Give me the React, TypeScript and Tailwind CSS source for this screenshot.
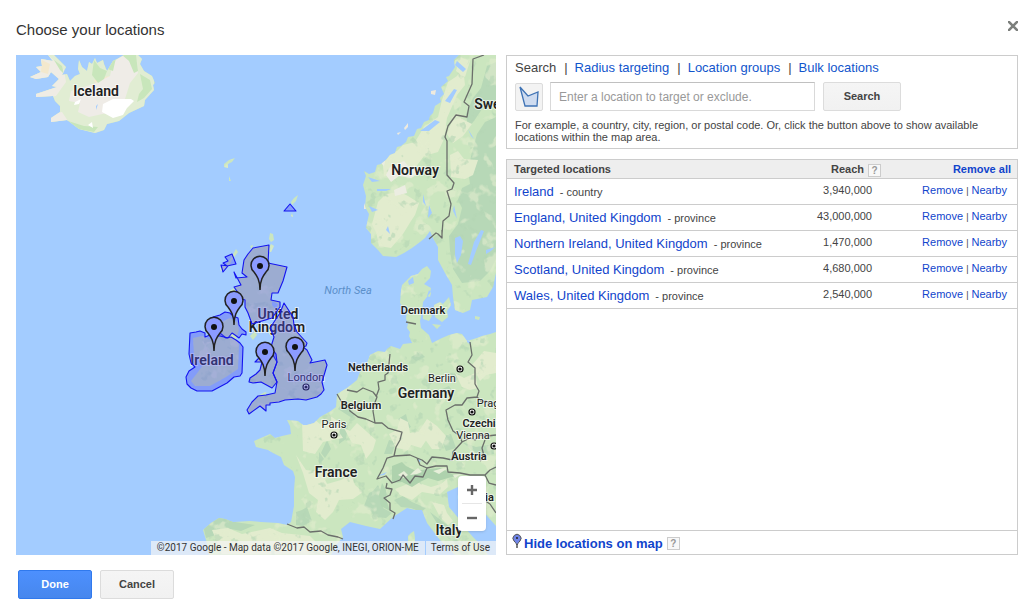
import { useState } from "react";

type Location = { name: string; kind: string; reach: string };

const initialLocations: Location[] = [
  { name: "Ireland", kind: "country", reach: "3,940,000" },
  { name: "England, United Kingdom", kind: "province", reach: "43,000,000" },
  { name: "Northern Ireland, United Kingdom", kind: "province", reach: "1,470,000" },
  { name: "Scotland, United Kingdom", kind: "province", reach: "4,680,000" },
  { name: "Wales, United Kingdom", kind: "province", reach: "2,540,000" },
];

const tabs = ["Search", "Radius targeting", "Location groups", "Bulk locations"];

const land = [
  // Iceland
  "M48 55l5 6-12-2 1 7-6 1 5 5-11 5 6 2 12-2 3-5 8 7-7 7 5 1-21 7v3l17-1 2 5 5 5v6l-9 6v4l16-2 12 9 16 4 9-3 3-6 12-3 10-8 15-7 1-6 9-10-1-5 2-2-3-7-8-5-4-7 2-5-4-4h-14l-7 4-4 2-6 10-3-7-1-4-6 3-2-5-3 6-3-2-2 9-5-4-3-7-1 9 2 5-5 2-5 5-3-7-5 1 4-8-6-6-6-6z",
  // Faroe, Shetland, Orkney, Hebrides
  "M224 164l5-4 6-2-3 4-4 2v4l-4-1zM229 176l2 5h-2zM291 202l3-4 4-3-2 6-4 4zM292 213l1 4-2-1zM269 239l1-6 3 1 1 6-3 2zM267 252l4-8 3 2-3 6zM231 258l5-9 2 3-6 8-3 6-8 5-1-3 6-3zM229 291l5-3 1 3zM250 246l3-1-1 4zM250 336l5-5 2 4-4 5zM266 328l5-3 2 7-2 4zM272 301l6 3-2 6-4-5zM258 396l7-4 2 1-5 3z",
  // Norway and Sweden
  "M459 55l-5 5 1 7-6 9-3 1 2 4-7 6 3 7-4 4 1 4-6 4-2 7-3 3-1 4-5 2-3 6-4 1-3 7-6 1-2 5-5 4-4 1-2 6-5 2-4 5-5 4-4 1-2 7-6 2L364 171L366 176L363 185L366 196L365 207L369 214L366 228L371 234L371 243L378 250L383 256L396 257L404 253L412 248L420 242L425 238L430 231L433 238L438 247L438 260L445 273L452 285L453 297L455 310L463 313L470 310L472 300L487 297L493 287L496 273V55z",
  // Mainland Europe
  "M427 266L422 269L418 274L411 276L407 280L402 285L401 291L400 303L403 307L407 310L406 319L408 323L407 328L410 332L409 336L412 343L403 344L400 349L391 346L387 349L385 352L378 351L370 355L367 363L360 372L357 380L347 388L337 394L336 407L331 411L320 417L314 423L307 425L303 425L298 421L287 420L290 426L291 434L282 436L275 438L270 434L254 441L256 447L268 450L273 453L281 457L284 465L293 471L295 477L294 490L294 506L291 522L287 525L278 523L261 522L250 521L233 522L225 519L219 518L211 523L203 530L206 540L209 555H331L336 545L343 537L341 529L350 522L366 526L380 529L393 517L407 508L415 510L422 510L427 523L440 540L455 555H488L483 547L473 537L465 528L460 520L449 507L447 492L458 487L468 495L480 508L496 526V332L490 334L482 336L477 338L467 341L462 334L457 333L449 335L442 338L432 343L429 335L421 328L420 321L422 312L423 302L430 293L431 288L424 284L430 278L431 271z",
  "M423 313l6-2 3 5-3 5-6-2zM434 305l6-3 3 2 6-7 2 8-4 6 1 6-6 5-7-5zM432 324l9 1-4 4zM475 316l5 1-1 3-4-1zM429 290l2 3-1 4-3-1zM408 536l3-3 3-2 1 7-1 12-4 5h-3l1-10z",
];

const targets = [
  "M269 245L253 248L248 254L244 260L242 273L247 277L236 278L234 272L241 285L234 287L239 294L237 297L245 300L245 307L248 313L252 324L272 318L280 307L280 302L271 300L272 293L278 293L283 281L287 267L268 263z",
  "M284 303L293 317L294 325L297 332L307 343L306 346L303 347L307 350L312 360L310 363L325 360L327 365L325 372L322 382L324 390L321 394L317 397L306 400L298 399L285 400L279 402L270 403L270 405L266 405L266 411L260 406L249 414L247 410L252 402L258 396L266 395L275 393L277 382L273 373L277 362L270 350L274 337L270 328L280 313z",
  "M258 350L259 358L255 362L262 362L260 370L256 374L250 378L249 382L253 383L261 382L272 388L277 382L273 373L277 362L276 354L273 350z",
  "M190 333L196 332L200 331L205 333L205 337L210 335L216 336L220 333L226 338L231 337L236 340L240 343L243 347L242 373L240 376L234 377L227 383L212 391H197L191 388L187 384L186 377L189 371L195 367L191 363L189 354z",
  "M213 317L220 315L225 312L230 313L233 316L238 318L239 325L242 329L246 332V335L242 334L239 338L235 335L232 333L228 338L220 336L216 336L213 330z",
  "M225 257l7-3 4 10-9 2-4-3 5-2zM221 265l7 1-5 6zM284 211l6-7 6 7z",
];

// the Irish coast lies a little inside its target outline
const irishCoast = "M193 338l9-2 8 4 11-6 1-12 8-4 7 4 2 8-3 9 3 6-1 24-12 8-16 9h-15l-4-5 7-9 5-7-9-10z";

const coastline = [...land, targets[0], targets[1], targets[2], irishCoast].join(" ");

const borders = [
  "M484 55l-11 4-1 25-8 18 5 4-2 11-11-2-8 11-3 11 2 4v34l7 8-2 6-5 2 4 13-2 12-6 5-1 13M442 230v8l-4-4-2-1-7 6",
  "M406 322l10 2M390 354L388 373L385 375L385 380L378 382L379 389L376 397M337 394L341 401L348 405L350 411L358 417L366 419L375 423M347 390L357 392L363 388L373 392L377 397L374 405L373 411L375 423L382 423L388 428L402 432L400 440L396 447L394 456L387 458L383 468L377 479L386 476L392 483L400 480L403 475L410 483L415 476L423 477L427 468L420 465L417 458L410 455L394 456",
  "M387 483L386 488L392 489L390 495L384 498L390 503L390 510L395 513L393 519M417 458L422 460L427 464L432 457L443 458L452 460L453 452L462 442L460 436L453 431L448 420L446 410L455 405L462 405L467 398L477 397L479 391L475 384L475 368L468 362L472 355L470 342",
  "M427 468L436 466L447 466L448 472L460 473L470 475H478L485 475L490 470L496 467M462 442L470 438L475 440L480 435L487 436L496 435M477 397l4 4 5 0 3 3 7-2M485 475l4 8 7 2M287 524l10 4 7-1 6 5 11-1 7 4 10 2 5 2M484 500l6 4 6 9M485 440l-3 8 2 8-4 5",
];

const yellowPatches =
  "M302 422l12-3 6 5 9-9 13 9-3 8 4 6-20 4-8 12-12-3zM296 455l10 15 15 2 6 12 14-4 10-6 4 11 8 7-10 7-14 1-6 12-8 8-9-8 2-12-9-7-6-20zM344 428l6 3 7-8 19 17-3 10-7 9-5-14-9-2zM389 434l8-4 3-12 8 4 2 11 13-3 6 6-8 12-10-3-3 5-12-2zM419 431l8-12 10 7 9 10-5 13-9 0zM395 489l10-4 8-4 18 6 10-3 6-5 1 8-9 8-17-3-10 8-12-5zM432 502l12 3 3 8 6 8-5 4-8-8zM455 373l9 5 11-5 3 15-8 2-8-3zM472 365l12-14 12 2v20l-10 2-6 6zM212 530l16-2 14 6 28-6 12 5 28 3 10 10 8 8H222zM378 202l8-8 14-2 8 4 11 7-4 12-4 6-8 13-12 14-12-2-3-14-4-8zM382 157l15-6 6-6 12-3 9-15 14-10 4-17 6-18 9-6 6-9 2 18-8 10-10 23-3 21-6 13-14 4-9 12-17 6-14 2zM450 155l8-4 6 8 14 1-5 15-8 4-14-2zM460 57l10 4-5 16-9-6zM452 121l8-3 12 6-9 12-10 7-6-9z";
const greenPatches =
  "M462 188l8-4-2-14 4-18 5-18 8-12 11-5v142l-6 12-10 10-18 2-9-14-3-18-1-15 9-12 4-16-4-8zM473 98l8-10 6-22 9-4v42l-14 5-8 12-6 7-2-14zM296 512l6-2 5-3 5 14-9 5-7-1zM340 427l8-2-2 14-7 5zM338 409l4-6 6 2 9 7-5 6zM369 493l4-2 5-6 7 15-2 8 9 5-6 5-12-1-3-6-7-5zM389 440l7 2-4 12h-8zM398 419l8-5 2 8 3 5-6 3zM440 437l11-3 5 14-10 3zM411 357l9-5 5 5-9 4zM462 442l14 5 18-3v10l-10 2-8-3zM394 500l9-4 9 6 14 6-5 4-10-4-10-1zM430 512l20 15 4 9 8 8 7 11h-8l-7-13-9-6zM203 525l7-8 15 0 10 5 20 3-14 6-10-2-12 5-13 4zM327 440l4 9-6 9-4-5zM319 452l5 7-5 5zM448 373l12 1-5 9-9-4zM440 390l9-4 5 7-9 3z";

const pins = [
  [260, 265],
  [234, 300],
  [214, 326],
  [265, 351],
  [295, 346],
];

const capitals = [
  [460, 369],
  [334, 435],
  [306, 387],
  [472, 412],
  [494, 446],
];

const labels = [
  { text: "Iceland", x: 96, y: 96, size: 14, bold: true },
  { text: "Norway", x: 415, y: 175, size: 14, bold: true },
  { text: "Sweden", x: 499, y: 109, size: 14, bold: true },
  { text: "Denmark", x: 423, y: 314, size: 11, bold: true },
  { text: "Netherlands", x: 378, y: 371, size: 11, bold: true },
  { text: "Germany", x: 426, y: 398, size: 14, bold: true },
  { text: "Belgium", x: 361, y: 409, size: 11, bold: true },
  { text: "France", x: 336, y: 477, size: 14, bold: true },
  { text: "Czechia", x: 482, y: 427, size: 11, bold: true },
  { text: "Austria", x: 469, y: 460, size: 11, bold: true },
  { text: "Croatia", x: 476, y: 501, size: 11, bold: true },
  { text: "Italy", x: 449, y: 535, size: 14, bold: true },
  { text: "United", x: 278, y: 319, size: 14, bold: true },
  { text: "Kingdom", x: 277, y: 332, size: 14, bold: true },
  { text: "Ireland", x: 212, y: 365, size: 14, bold: true },
  { text: "London", x: 306, y: 381, size: 11, bold: false },
  { text: "Berlin", x: 442, y: 382, size: 11, bold: false },
  { text: "Paris", x: 334, y: 428, size: 11, bold: false },
  { text: "Prague", x: 494, y: 407, size: 11, bold: false },
  { text: "Vienna", x: 473, y: 439, size: 11, bold: false },
];

const MapPin = ({ x, y }: { x: number; y: number }) => (
  <g transform={`translate(${x} ${y})`}>
    <path
      d="M0 25C0 15-3 11-6 7A9 9 0 1 1 6 7C3 11 0 15 0 25z"
      fill="#8b9bff"
      stroke="#222"
      strokeWidth="1.5"
    />
    <circle cx="0" cy="1" r="3" fill="#111" />
  </g>
);

const LocationMap = ({ showLocations }: { showLocations: boolean }) => (
  <svg
    viewBox="16 55 480 500"
    preserveAspectRatio="xMidYMid slice"
    className="absolute inset-0 h-full w-full"
    fontFamily="Roboto, sans-serif"
    textAnchor="middle"
    role="img"
    aria-label="Map of targeted locations"
  >
    <defs>
      <clipPath id="land">
        <path d={coastline} />
      </clipPath>
      {/* mottled terrain */}
      <filter id="pale" x="0" y="0" width="1" height="1" colorInterpolationFilters="sRGB">
        <feTurbulence type="fractalNoise" baseFrequency="0.06" numOctaves="3" seed="7" />
        <feColorMatrix values="0 0 0 0 .89  0 0 0 0 .93  0 0 0 0 .81  10 0 0 0 -5.9" />
      </filter>
      <filter id="forest" x="0" y="0" width="1" height="1" colorInterpolationFilters="sRGB">
        <feTurbulence type="fractalNoise" baseFrequency="0.09" numOctaves="3" seed="21" />
        <feColorMatrix values="0 0 0 0 .71  0 0 0 0 .84  0 0 0 0 .71  0 10 0 0 -6.4" />
      </filter>
    </defs>
    <rect x="16" y="55" width="480" height="500" fill="#a3ccff" />
    <path d={coastline} fill="#cbe6bf" />
    <g clipPath="url(#land)">
      <path d={greenPatches} fill="#b7d8b7" />
      <path d={yellowPatches} fill="#e2ecce" />
      <rect x="160" y="55" width="336" height="500" filter="url(#pale)" opacity="0.6" />
      <rect x="160" y="55" width="336" height="500" filter="url(#forest)" opacity="0.6" />
      {/* Iceland's plains, highlands and glaciers */}
      <path d="M28 55h126v80H28z" fill="#e1edd3" />
      <path d="M28 60l20-5 16 15 2 12-10 14-26 4zM50 114l12-2 6 9-20 3z" fill="#efece5" />
      <path d="M42 60l8 4-2 10-7-2zM94 80l15-4 2 10-12 4z" fill="#f3e8cd" />
      <path d="M113 62l6-4 6-3 12 6 1 12-8 10-5 16-10 6-8 8-18 4-11-5 2-9-11-2 2-10 25-8 14-7z" fill="#efece7" />
      <path d="M94 60l6 8 7 3-3 8-6 4-6-8zM108 58h8l-3 13-8-3zM122 55h14l2 16-4 2-5-12zM140 74l10 6 2 9-8 9-7 4 2-8 4-5zM68 121l16 5 14 1-4 5-16-3zM54 60l8 6 2 8-4-4z" fill="#c8e6bb" />
      <path d="M103 104l10-5 18 0 3 2-7 7-4 7-10 3-11-6zM75 102l6-3-2 5-5 1zM88 125l4-3 1 6z" fill="#fff" />
      {/* Scandinavian mountains and the Alps */}
      <path d="M390 167l14-6 6 7 16 1-15 9-12-2-8 6-5-7zM394 190l11-5 2 8-12 3zM379 161l7-4-2 9z" fill="#ecede2" />
      <path d="M392 466l10-4 4 4 10 5 12-2 12-1 16 8-8 2-10 3-10-3-8 4-8 5-10-5-10 1z" fill="#aed2ad" />
      <path d="M398 475l6-4 4 4-4 3zM410 475l4-4 4-3 4 4-5 2zM433 471l7-2 8-1-9 6zM453 475l8-1-6 4z" fill="#e6eed9" />
      <path d="M382 483l4 7 1 12 3 9-9-5-2-11z" fill="#b4d7b3" />
      {/* lakes and fjords */}
      <g fill="#a3ccff">
        <path d="M455 238l5-2 3 5-2 14-4 8-2-8zM474 242l7-12 3 1-8 20-5 14-3-1zM486 250l9-3-4 4-5 3zM420 131l7-5 8-6 5 2-5 4-6 5zM377 189h14l-5 2h-9zM368 177l12 4-8 1zM369 206l9 4-6 2zM388 226l2 8-4-4zM454 205l3 14-4-8zM423 194l3 12-3-4zM429 205l-1 13 4-5zM445 101l9-12 3 1-7 13zM457 61l9 8-3 3-8-7zM468 129l6 10-3-3zM408 281l5-4 1 6-5 2zM377 476l10-4-3 3zM417 458l4 3-2 1zM96 110l2-6-2 2zM467 333l4 12-4-3z" />
      </g>
    </g>
    {/* skerries off the Norwegian coast */}
    <path d="M431 91l5-1-1 5-4-1zM404 128l4-5v4l-3 3zM397 133l4-1-3 3zM364 203l2 6h-2z" fill="#eeeade" />
    <g fill="none" stroke="#6b6f6b" strokeWidth="1.3" strokeLinejoin="round">
      <path d={borders.join(" ")} />
    </g>
    <text x="348" y="294" fontSize="11" fontStyle="italic" fill="#5b8fc9">
      North Sea
    </text>
    {capitals.map(([x, y]) => (
      <g key={`${x}-${y}`}>
        <circle cx={x} cy={y} r="3" fill="#fff" stroke="#111" strokeWidth="1.2" />
        <circle cx={x} cy={y} r="1.6" fill="#111" />
      </g>
    ))}
    {labels.map((label) => (
      <text
        key={label.text}
        x={label.x}
        y={label.y}
        fontSize={label.size}
        fontWeight={label.bold ? 600 : 400}
        fill="#222"
        stroke="#fff"
        strokeOpacity="0.6"
        strokeWidth="2"
        paintOrder="stroke"
      >
        {label.text}
      </text>
    ))}
    {showLocations && (
      <g>
        <g fill="#5050f0" fillOpacity="0.38" stroke="#1414f0" strokeWidth="1.1" strokeLinejoin="round">
          {targets.map((d) => (
            <path key={d} d={d} />
          ))}
        </g>
        {pins.map(([x, y]) => (
          <MapPin key={`${x}-${y}`} x={x} y={y} />
        ))}
      </g>
    )}
  </svg>
);

const HelpButton = ({ label }: { label: string }) => (
  <button
    type="button"
    aria-label={label}
    className="ml-1 inline-block h-[13px] w-[13px] border border-[#ccc] bg-[#f8f8f8] text-center align-middle text-[10px] leading-[11px] font-bold text-[#999]"
  >
    ?
  </button>
);

export default function App() {
  const [locations, setLocations] = useState(initialLocations);
  const [showLocations, setShowLocations] = useState(true);

  const removeLocation = (name: string) => {
    setLocations(locations.filter((location) => location.name !== name));
  };

  return (
    <div className="min-h-screen bg-white pr-[18px] pl-4 font-['Liberation_Sans',Arial,sans-serif] text-[#444]">
      <header className="flex h-[55px] items-center justify-between pt-[6px]">
        <h1 className="text-[15px] text-[#333]">Choose your locations</h1>
        <button type="button" aria-label="Close" className="mb-[10px]">
          <svg className="h-[10px] w-[10px]" viewBox="0 0 10 10" stroke="#7c7f7c" strokeWidth="2.6">
            <path d="M0 0l10 10M10 0L0 10" />
          </svg>
        </button>
      </header>

      <main className="grid min-h-[500px] grid-cols-[480fr_512fr] gap-[10px]">
        {/* Map */}
        <section className="relative overflow-hidden">
          <LocationMap showLocations={showLocations} />
          <div className="absolute right-[10px] bottom-6 flex w-7 flex-col rounded-sm bg-white px-1 shadow">
            <button type="button" aria-label="Zoom in" className="flex h-7 items-center justify-center border-b border-[#e6e6e6]">
              <svg className="h-[10px] w-[10px]" viewBox="0 0 10 10" stroke="#666" strokeWidth="2.4">
                <path d="M0 5h10M5 0v10" />
              </svg>
            </button>
            <button type="button" aria-label="Zoom out" className="flex h-[27px] items-center justify-center">
              <svg className="h-[10px] w-[10px]" viewBox="0 0 10 10" stroke="#666" strokeWidth="2.4">
                <path d="M0 5h10" />
              </svg>
            </button>
          </div>
          <div className="absolute right-0 bottom-0 flex h-[14px] bg-[#f5f5f5]/70 font-[Roboto,sans-serif] text-[10px] leading-[14px] whitespace-nowrap text-[#333]">
            <span className="px-[6px]">©2017 Google - Map data ©2017 Google, INEGI, ORION-ME</span>
            <a href="#terms" className="border-l border-[#a3ccff] pr-[6px] pl-[5px]">
              Terms of Use
            </a>
          </div>
        </section>

        <div className="flex flex-col gap-[10px]">
          {/* Search */}
          <section className="h-[94px] border border-[#ccc] px-2 pt-1">
            <nav className="flex gap-2 text-[13px] leading-4">
              {tabs.map((tab, index) => (
                <span key={tab} className="flex gap-[7px]">
                  {index > 0 && <span>|</span>}
                  {index === 0 ? (
                    <span>{tab}</span>
                  ) : (
                    <a href="#tab" className="text-[#15c]">
                      {tab}
                    </a>
                  )}
                </span>
              ))}
            </nav>
            <form className="mt-[6px] flex gap-2" onSubmit={(e) => e.preventDefault()}>
              <button
                type="button"
                aria-label="Show available locations"
                className="mt-px mr-[-1px] flex h-7 w-7 items-center justify-center rounded-xs border border-[#dcdcdc] bg-[#f3f3f3]"
              >
                <svg className="h-[22px] w-5" viewBox="0 0 20 22" fill="#cfdcf0" stroke="#3f73b5" strokeWidth="1.3">
                  <path d="M1 1l8 9 10-4-1 14H6z" />
                </svg>
              </button>
              <input
                type="text"
                aria-label="Location"
                placeholder="Enter a location to target or exclude."
                className="h-[29px] w-[265px] border border-[#d9d9d9] border-t-[#c0c0c0] px-2 text-[12px] placeholder:text-[#999]"
              />
              <button
                type="submit"
                className="h-[29px] w-[78px] rounded-xs border border-[#dcdcdc] bg-linear-to-b from-[#f5f5f5] to-[#f1f1f1] text-[11px] font-bold text-[#444]"
              >
                Search
              </button>
            </form>
            <p className="mt-2 text-[11px] leading-3">
              For example, a country, city, region, or postal code. Or, click the button above to show available
              locations within the map area.
            </p>
          </section>

          {/* Targeted locations */}
          <section className="flex flex-1 flex-col border border-[#ccc]">
            <table className="w-full border-separate border-spacing-0 text-[11px]">
              <thead>
                <tr className="h-[19px] bg-[#eee] leading-4">
                  <th className="border-b border-[#ccc] pl-[7px] text-left">Targeted locations</th>
                  <th className="w-[90px] border-b border-[#ccc] text-right whitespace-nowrap">
                    Reach
                    <HelpButton label="About reach" />
                  </th>
                  <th className="w-[136px] border-b border-[#ccc] pr-[6px] text-right">
                    <button type="button" className="font-bold text-[#14c]" onClick={() => setLocations([])}>
                      Remove all
                    </button>
                  </th>
                </tr>
              </thead>
              <tbody>
                {locations.map((location) => (
                  <tr key={location.name} className="h-[26px] leading-4">
                    <td className="border-b border-[#ccc] pl-[7px]">
                      <a href="#location" className="mr-[6px] text-[13px] text-[#14c]">
                        {location.name}
                      </a>
                      - {location.kind}
                    </td>
                    <td className="border-b border-[#ccc] pr-[9px] pb-[3px] text-right">{location.reach}</td>
                    <td className="border-b border-[#ccc] pr-[10px] pb-[3px] text-right">
                      <button type="button" className="text-[#14c]" onClick={() => removeLocation(location.name)}>
                        Remove
                      </button>{" "}
                      <span className="text-[9px]">|</span>{" "}
                      <a href="#nearby" className="text-[#14c]">
                        Nearby
                      </a>
                    </td>
                  </tr>
                ))}
              </tbody>
            </table>
            <div className="mt-auto flex h-6 items-center border-t border-[#ccc] pt-[2px] pl-[5px]">
              <svg className="mb-[6px] h-4 w-[10px]" viewBox="0 0 10 16" fill="#6f84e8" stroke="#555" strokeWidth="1">
                <path d="M5 15c0-4-1-5-3-7a4 4 0 1 1 6 0C6 10 5 11 5 15z" />
                <circle cx="5" cy="5" r="1" fill="#222" stroke="none" />
              </svg>
              <button
                type="button"
                className="ml-[2px] text-[13px] font-bold text-[#14c]"
                onClick={() => setShowLocations(!showLocations)}
              >
                {showLocations ? "Hide locations on map" : "Show locations on map"}
              </button>
              <HelpButton label="About locations on map" />
            </div>
          </section>
        </div>
      </main>

      <footer className="flex gap-2 px-[2px] pt-[15px] text-[11px] font-bold">
        <button
          type="button"
          className="h-[29px] w-[74px] rounded-xs border border-[#3079ed] bg-linear-to-b from-[#4d90fe] to-[#4787ed] text-white"
        >
          Done
        </button>
        <button
          type="button"
          className="h-[29px] w-[74px] rounded-xs border border-[#dcdcdc] bg-linear-to-b from-[#f5f5f5] to-[#f1f1f1] text-[#444]"
        >
          Cancel
        </button>
      </footer>
    </div>
  );
}
